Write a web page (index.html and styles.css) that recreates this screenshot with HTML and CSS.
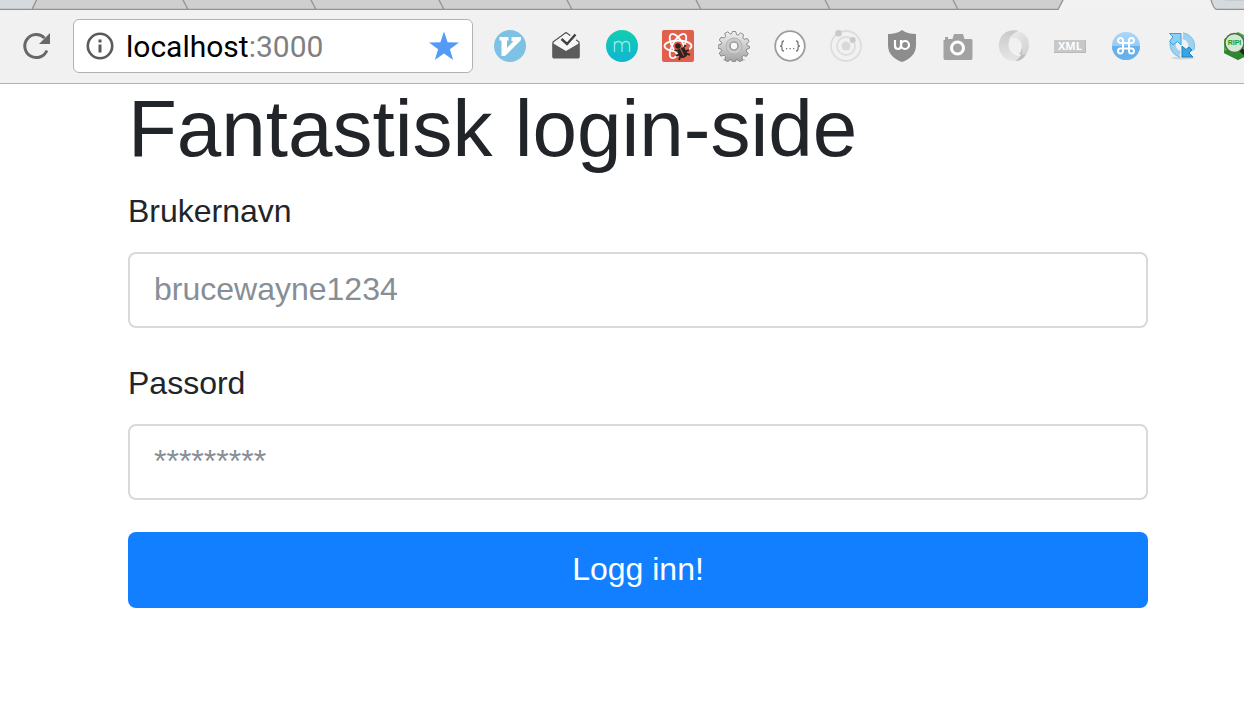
FILE: index.html
```html
<!DOCTYPE html>
<html lang="no">
<head>
<meta charset="utf-8">
<title>Fantastisk login-side</title>
<link rel="stylesheet" href="styles.css">
</head>
<body>
<header class="browser">
  <div class="tabs" aria-hidden="true">
    <svg class="tabs-art" width="2400" height="10" viewBox="0 0 2400 10">
      <path fill="#d5dade" d="M0 0H2400V10H0z"/>
      <path fill="#cfcfcf" d="M36 0H1063L1058 10H32z"/>
      <path fill="#f2f2f2" d="M1063 0H1211L1217 10H1058z"/>
      <path fill="#c9ccce" d="M1224 0H2400V1H1226z"/>
      <path fill="none" stroke="#8f9294" stroke-width="1.3" d="M36.500 0L32 9.500M183 0L188 9.500M311 0L316 9.500M439 0L444 9.500M567 0L572 9.500M696 0L701 9.500M825 0L830 9.500M953 0L958 9.500M0 9.500H1058L1063 0M1211 0Q1214 9.500 1217 9.500H2400"/>
    </svg>
  </div>
  <div class="toolbar">
    <button class="reload" aria-label="Reload">
      <svg width="32" height="32" viewBox="0 0 32 32"><path fill="none" stroke="#686868" stroke-width="3" d="M26.900 20.500A11.500 11.500 0 1 1 24.500 8"/><path fill="#686868" d="M30 3V14H19z"/></svg>
    </button>
    <div class="omnibox">
      <svg width="28" height="28" viewBox="0 0 28 28"><circle cx="14" cy="14" r="12.200" fill="none" stroke="#5a5a5a" stroke-width="2.600"/><path fill="#5a5a5a" d="M12.500 7.500h3v3h-3zM12.500 12.500h3v8h-3z"/></svg>
      <div class="address">localhost<span class="port">:3000</span></div>
      <button class="bookmark" aria-label="Bookmark">
        <svg width="32" height="32" viewBox="0 0 32 32"><path fill="#549bf6" d="M16 1.500L19.600 12.200L31 12.400L21.900 19.200L25.200 30L16 23.600L6.800 30L10.100 19.200L1 12.400L12.400 12.200z"/></svg>
      </button>
    </div>
    <div class="extensions">
      <svg class="ext" viewBox="0 0 32 32"><circle cx="16" cy="16" r="16" fill="#7dc1e5"/><path fill="#fff" d="M5.500 7H14.500V10.500H13V18L19.500 11H17.500V7H27V10L11 26H7.500V10.500H5.500z"/></svg>
      <svg class="ext" viewBox="0 0 32 32"><path fill="#f7f7f7" stroke="#555" stroke-width="1.200" stroke-linejoin="round" d="M3 27V12L16 2.500L29 12V27z"/><path fill="#5b5b5b" d="M2.500 13L16 21L29.500 13V27Q29.500 28.500 28 28.500H4Q2.500 28.500 2.500 27z"/><path fill="none" stroke="#f1f1f1" stroke-width="3" d="M20 6L26 10"/><path fill="none" stroke="#414141" stroke-width="2.400" d="M11.500 9L17 14L25.500 4.500"/></svg>
      <svg class="ext" viewBox="0 0 32 32"><defs><linearGradient id="teal" x2="0" y2="1"><stop stop-color="#12cdb0"/><stop offset="1" stop-color="#11b5d2"/></linearGradient></defs><circle cx="16" cy="16" r="16" fill="url(#teal)"/><path fill="none" stroke="#8bebe6" stroke-width="1.300" d="M8.500 22V11.500M8.500 15Q9 11.500 12.500 11.500Q16 11.500 16 15.500V22M16 15.500Q16.500 11.500 20 11.500Q23.500 11.500 23.500 15.500V22"/></svg>
      <svg class="ext" viewBox="0 0 32 32"><rect width="32" height="32" rx="2" fill="#e1604d"/><g fill="none" stroke="#fff" stroke-width="1.800"><ellipse cx="16" cy="16" rx="13.500" ry="5.500"/><ellipse cx="16" cy="16" rx="13.500" ry="5.500" transform="rotate(60 16 16)"/><ellipse cx="16" cy="16" rx="13.500" ry="5.500" transform="rotate(120 16 16)"/></g><path fill="#e1604d" d="M15 20L27 17L28 28L17 31z"/><g transform="rotate(-25 20 22)" fill="#2b2421" stroke="#2b2421"><path stroke="none" d="M16 18H24V25Q24 28 20 28Q16 28 16 25z"/><path fill="none" stroke-width="1.800" d="M14 17l2 2M13 23h14M14 28l3-3M26 17l-2 2M26 28l-3-3"/><path stroke="#e1604d" d="M20 18v8"/></g><circle cx="16" cy="16" r="2.800" fill="#2b2421"/></svg>
      <svg class="ext" viewBox="0 0 32 32"><defs><linearGradient id="steel" x2="0" y2="1"><stop stop-color="#f2f2f2"/><stop offset="1" stop-color="#a2a2a2"/></linearGradient></defs><ellipse cx="16" cy="30" rx="12" ry="1.500" fill="#cfcfcf"/><path fill="url(#steel)" stroke="#808080" stroke-width=".900" stroke-linejoin="round" d="M14.300 1.500h3.400l.800 3.200 1.500.500 2.600-2.300 2.900 1.700-.700 3.400 1.300 1.300 3.300-.800 1.600 3-2.300 2.500.400 1.600 2.400.800v1.700l-2.900 1.300-.500 1.600 2.100 2.600-1.600 2.700-3.400-.700-1.300 1.300.7 3.200-3 1.600-2.400-2.300-1.500.500-.8 2.100h-2l-1.200-2.200-1.500-.400-2.500 2.300-2.900-1.700.7-3.400-1.300-1.300-3.300.8-1.600-3 2.300-2.400-.5-1.500-3.100-1v-3l3.100-1 .5-1.600-2.300-2.500 1.700-2.900 3.300.8 1.300-1.300-.8-3.300 3-1.600 2.500 2.300 1.500-.5z"/><circle cx="16" cy="16" r="8" fill="#c9c9c9" stroke="#b4b4b4"/><circle cx="16" cy="16" r="4" fill="#f7f7f7" stroke="#858585" stroke-width="1.200"/></svg>
      <svg class="ext" viewBox="0 0 32 32"><circle cx="16" cy="16" r="14.800" fill="#fff" stroke="#9d9d9d" stroke-width="1.800"/><path fill="none" stroke="#777" stroke-width="1.300" d="M10 11Q8 11 8 13V14.500Q8 16 6 16Q8 16 8 17.500V19Q8 21 10 21M22 11Q24 11 24 13V14.500Q24 16 26 16Q24 16 24 17.500V19Q24 21 22 21"/><path fill="#777" d="M12 18h1.300v1.300H12zM15.500 18h1.300v1.300h-1.300zM19 18h1.300v1.300H19z"/></svg>
      <svg class="ext" viewBox="0 0 32 32"><g fill="none" stroke="#dddddd" stroke-width="1.800"><circle cx="16" cy="16" r="15"/><circle cx="16" cy="16" r="9"/></g><circle cx="16" cy="16" r="4.500" fill="#d9d9d9"/><circle cx="8.500" cy="3.300" r="3.300" fill="#c9c9c9"/><circle cx="22.700" cy="10" r="3" fill="#c9c9c9"/></svg>
      <svg class="ext" viewBox="0 0 32 32"><path fill="#8d8d8d" d="M16 0Q21 4 30 4V15Q30 27 16 32Q2 27 2 15V4Q11 4 16 0z"/><path fill="none" stroke="#fff" stroke-width="2.200" d="M9 10V15.500Q9 19 12 19Q15 19 15 15.500V10"/><circle cx="19" cy="15" r="4" fill="none" stroke="#fff" stroke-width="2.200"/></svg>
      <svg class="ext" viewBox="0 0 32 32"><path fill="#a2a2a2" d="M3 7H6V9H10.500L12 4H21L22.500 9H29Q30.500 9 30.500 11V28Q30.500 30 29 30H3Q1.500 30 1.500 28V10H3z"/><circle cx="15.500" cy="18" r="6" fill="#a2a2a2" stroke="#fff" stroke-width="3"/></svg>
      <svg class="ext" viewBox="0 0 32 32"><defs><linearGradient id="ring-a" x2="1" y2="1"><stop stop-color="#ededed"/><stop offset="1" stop-color="#cdcdcd"/></linearGradient><linearGradient id="ring-b" x2="0" y2="1"><stop stop-color="#c9c9c9"/><stop offset="1" stop-color="#e6e6e6"/></linearGradient></defs><path fill="url(#ring-b)" d="M21 1Q9-2 3 7Q-2 17 4 25Q8 31 16 31Q24 31 27 25Q19 28 14 23Q9 18 11 11Q14 3 21 1z"/><path fill="url(#ring-a)" d="M11 9Q15 2 23 2Q31 6 31 16Q30 27 19 31Q25 25 24 16Q22 7 15 8Q12 8 11 13z"/><path fill="#bdbdbd" d="M24 16Q26 26 17 31Q25 31 28 24Q25 25 21 24Q24 21 24 16z"/></svg>
      <svg class="ext" viewBox="0 0 32 32"><path fill="#c8c8c8" d="M0 10H32V23H0z"/><path fill="none" stroke="#b9b9b9" d="M0 22.500H31.500V10"/><text class="xml" x="16" y="20" text-anchor="middle">XML</text></svg>
      <svg class="ext" viewBox="0 0 32 32"><defs><linearGradient id="sky" x2="0" y2="1"><stop stop-color="#a9d6fa"/><stop offset="1" stop-color="#84c1f1"/></linearGradient></defs><circle cx="16" cy="16" r="14" fill="url(#sky)"/><path fill="#68b0ea" d="M2 16H30A14 14 0 0 1 2 16z"/><path fill="none" stroke="#fff" stroke-width="2" d="M13 13V11A2.500 2.500 0 1 0 10.500 13H21.500A2.500 2.500 0 1 0 19 10.500V21A2.500 2.500 0 1 0 21.500 18.500H10.500A2.500 2.500 0 1 0 13 21z"/></svg>
      <svg class="ext" viewBox="0 0 32 32"><ellipse cx="17" cy="28" rx="12" ry="1.500" fill="#d4d4d4"/><path fill="none" stroke="#9fd0ec" stroke-width="6" d="M17 6A10 10 0 0 1 24.500 20M14 24A10 10 0 0 1 7.500 10"/><path fill="none" stroke="#73bfe8" stroke-width="1" d="M17 3A13 13 0 0 1 28 20M14 27A13 13 0 0 1 5 10"/><path fill="#8ad0f5" stroke="#3b9fd9" d="M3.500 3.500H15V15L11.500 11.500L7 15L3.500 11.500L7 7z"/><path fill="#38a4e0" stroke="#1e82c4" d="M16 27V16L20 19.500L23 17L26 20L23 23L27 27z"/></svg>
      <svg class="ext" viewBox="0 0 32 32"><path fill="#4fae48" d="M16 2L30 9V23L16 30L2 23V9z"/><path fill="#2d8731" d="M2 21L16 17L30 23L16 30L2 23z"/><circle cx="12.500" cy="13" r="9.500" fill="#d3ead0" stroke="#4d6b4c" stroke-width="1.400"/><path stroke="#222" stroke-width="4" d="M19 20L27 27"/><text class="rip" x="12.500" y="15" text-anchor="middle">RIPI</text></svg>
    </div>
  </div>
</header>
<main class="page">
  <h1 class="title">Fantastisk login-side</h1>
  <form class="login">
    <div class="field">
      <label for="username">Brukernavn</label>
      <input class="control" id="username" type="text" placeholder="brucewayne1234">
    </div>
    <div class="field">
      <label for="password">Passord</label>
      <input class="control" id="password" type="password" placeholder="*********">
    </div>
    <button class="submit" type="button">Logg inn!</button>
  </form>
</main>
</body>
</html>
```
FILE: styles.css
```css
* { box-sizing: border-box; }
body {
  margin: 0;
  background: #fff;
  color: #212529;
  font: 32px/46px "Liberation Sans", Arial, sans-serif;
}
svg { display: block; flex: none; }
.browser { border-bottom: 1px solid #b0b0b0; background: #f1f1f1; }
.tabs { height: 10px; overflow: hidden; }
.toolbar {
  display: flex;
  align-items: center;
  padding: 9px 0 10px 20px;
}
.reload, .bookmark {
  flex: none;
  padding: 0;
  border: 0;
  background: none;
}
.omnibox {
  display: flex;
  flex: 1;
  align-items: center;
  min-width: 0;
  height: 54px;
  margin: 0 21px;
  padding: 0 12px;
  border: 1px solid #b2b2b2;
  border-radius: 6px;
  background: #fff;
}
.address {
  flex: 1;
  padding: 2px 0 0 12px;
  color: #000;
  font: 30px/36px Roboto, sans-serif;
}
.port { color: #808080; }
.extensions {
  display: flex;
  flex: 0 0 750px;
  gap: 24px;
  overflow: hidden;
}
.ext { width: 32px; height: 32px; }
.xml { fill: #fff; font: bold 11px "Open Sans", sans-serif; }
.rip { fill: #159b23; font: bold 7px "Liberation Sans", sans-serif; }
.page { padding: 0 96px 32px 128px; }
.title {
  margin: 0 0 14px;
  font-size: 80px;
  font-weight: 400;
  line-height: 90px;
}
.login { display: flex; flex-direction: column; gap: 32px; }
.field { display: flex; flex-direction: column; gap: 18px; }
.control {
  width: 100%;
  height: 76px;
  padding: 15px 24px 17px;
  border: 2px solid #d9d9d9;
  border-radius: 8px;
  background: #fff;
  color: #495057;
  font: 32px/40px "Liberation Sans", Arial, sans-serif;
}
.control::placeholder { color: #868e96; opacity: 1; }
.submit {
  height: 76px;
  padding: 0 24px 2px;
  border: 0;
  border-radius: 8px;
  background: #117fff;
  color: #fff;
  font: 32px/40px "Liberation Sans", Arial, sans-serif;
}
```
